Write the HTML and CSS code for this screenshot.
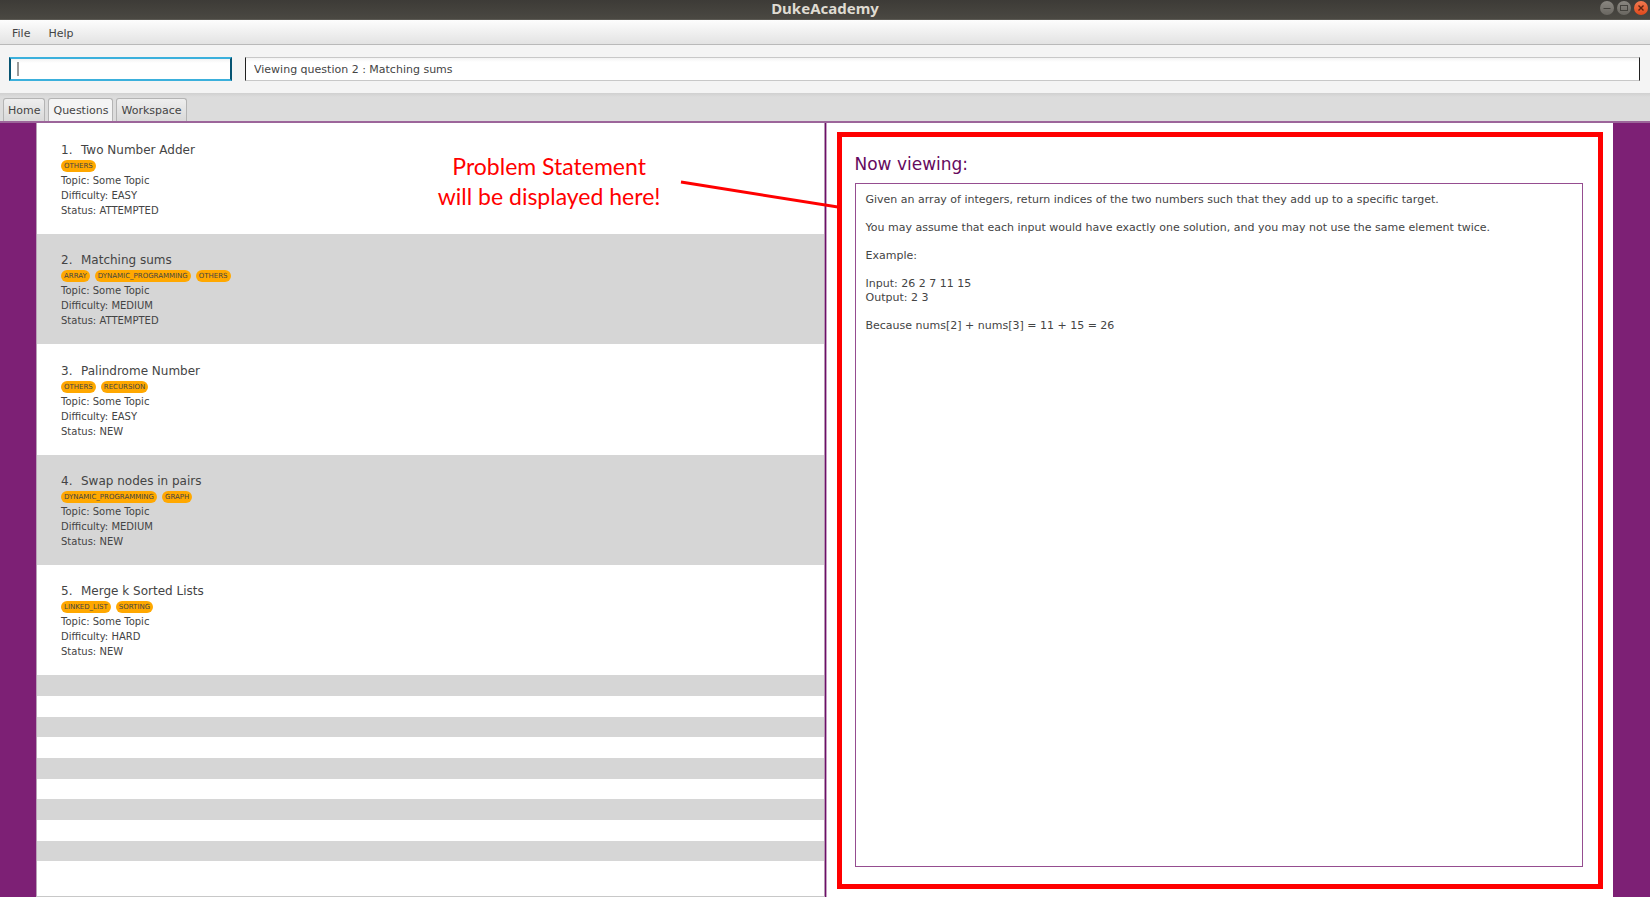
FILE: index.html
```html
<!DOCTYPE html>
<html lang="en">
<head>
<meta charset="utf-8">
<title>DukeAcademy</title>
<link rel="stylesheet" href="styles.css">
</head>
<body>
<header class="titlebar">
  <h1 class="titlebar-name">DukeAcademy</h1>
  <div class="window-buttons">
    <button class="window-button" type="button" aria-label="Minimize"><svg viewBox="0 0 14 14"><path d="M3.5 7.5h7"/></svg></button>
    <button class="window-button" type="button" aria-label="Maximize"><svg viewBox="0 0 14 14"><rect x="3.5" y="4.5" width="7" height="5"/></svg></button>
    <button class="window-button close" type="button" aria-label="Close"><svg viewBox="0 0 14 14"><path d="M4.5 4.5l5 5M9.5 4.5l-5 5"/></svg></button>
  </div>
</header>
<nav class="menubar">
  <button class="menu" type="button">File</button>
  <button class="menu" type="button">Help</button>
</nav>
<section class="command-row">
  <div class="command-box">
    <input class="field command" type="text" aria-label="Command">
    <span class="caret"></span>
  </div>
  <input class="field result" type="text" aria-label="Result" value="Viewing question 2 : Matching sums" readonly>
</section>
<div class="tabs" role="tablist">
  <button class="tab" type="button" role="tab">Home</button>
  <button class="tab selected" type="button" role="tab" aria-selected="true">Questions</button>
  <button class="tab" type="button" role="tab">Workspace</button>
</div>
<main class="workspace">
  <section class="list-pane">
    <ol class="questions">
      <li class="question">
        <h2 class="question-title"><span class="number">1.</span>Two Number Adder</h2>
        <div class="tags"><span class="tag">OTHERS</span></div>
        <p>Topic: Some Topic</p><p>Difficulty: EASY</p><p>Status: ATTEMPTED</p>
      </li>
      <li class="question">
        <h2 class="question-title"><span class="number">2.</span>Matching sums</h2>
        <div class="tags"><span class="tag">ARRAY</span><span class="tag">DYNAMIC_PROGRAMMING</span><span class="tag">OTHERS</span></div>
        <p>Topic: Some Topic</p><p>Difficulty: MEDIUM</p><p>Status: ATTEMPTED</p>
      </li>
      <li class="question">
        <h2 class="question-title"><span class="number">3.</span>Palindrome Number</h2>
        <div class="tags"><span class="tag">OTHERS</span><span class="tag">RECURSION</span></div>
        <p>Topic: Some Topic</p><p>Difficulty: EASY</p><p>Status: NEW</p>
      </li>
      <li class="question">
        <h2 class="question-title"><span class="number">4.</span>Swap nodes in pairs</h2>
        <div class="tags"><span class="tag">DYNAMIC_PROGRAMMING</span><span class="tag">GRAPH</span></div>
        <p>Topic: Some Topic</p><p>Difficulty: MEDIUM</p><p>Status: NEW</p>
      </li>
      <li class="question">
        <h2 class="question-title"><span class="number">5.</span>Merge k Sorted Lists</h2>
        <div class="tags"><span class="tag">LINKED_LIST</span><span class="tag">SORTING</span></div>
        <p>Topic: Some Topic</p><p>Difficulty: HARD</p><p>Status: NEW</p>
      </li>
    </ol>
    <div class="empty-rows"><i></i><i></i><i></i><i></i><i></i><i></i><i></i><i></i><i></i></div>
    <div class="callout">
      <p class="callout-text">Problem Statement<br>will be displayed here!</p>
      <svg class="callout-line" viewBox="0 0 160 32" width="160" height="32"><path d="M3 3L160 28"/></svg>
    </div>
  </section>
  <section class="statement-pane">
    <div class="highlight">
      <h2 class="viewing">Now viewing:</h2>
      <article class="statement">
        <p>Given an array of integers, return indices of the two numbers such that they add up to a specific target.</p>
        <p>You may assume that each input would have exactly one solution, and you may not use the same element twice.</p>
        <p>Example:</p>
        <p>Input: 26 2 7 11 15<br>Output: 2 3</p>
        <p>Because nums[2] + nums[3] = 11 + 15 = 26</p>
      </article>
    </div>
  </section>
</main>
</body>
</html>
```
FILE: styles.css
```css
* { box-sizing: border-box; }

body {
  margin: 0;
  min-height: 100vh;
  display: flex;
  flex-direction: column;
  background: #f4f4f4;
  color: #444;
  font: 11px/14px "DejaVu Sans", sans-serif;
}

h1, h2, p, ol { margin: 0; padding: 0; font-weight: normal; }
button, input { font: inherit; color: inherit; }

.titlebar {
  height: 20px;
  display: grid;
  grid-template-columns: 1fr auto 1fr;
  background: linear-gradient(#3d3b37, #4a4842);
  border-bottom: 1px solid #5c5a54;
}
.titlebar-name {
  grid-column: 2;
  font: bold 15px/16px "Noto Sans", sans-serif;
  color: #dfdbd2;
}
.window-buttons {
  display: flex;
  justify-content: flex-end;
  gap: 3px;
  padding: 1px 2px 0 0;
}
.window-button {
  width: 14px;
  height: 14px;
  padding: 0;
  border: 0;
  border-radius: 50%;
  background: linear-gradient(#8a8781, #696660);
}
.window-button svg { display: block; width: 14px; height: 14px; fill: none; stroke: #44423d; }
.window-button.close { background: linear-gradient(#f37a50, #e0491b); }
.window-button.close svg { stroke: #5d2310; stroke-width: 1.4; }

.menubar {
  height: 25px;
  display: flex;
  gap: 18px;
  padding: 0 12px;
  background: linear-gradient(#fdfdfd, #e3e3e3);
  border-bottom: 1px solid #b9b9b9;
}
.menu { padding: 3px 0 0; border: 0; background: none; }

.command-row {
  display: flex;
  gap: 13px;
  padding: 12px 10px 12px 9px;
}
.command-box { position: relative; width: 223px; }
.field {
  width: 100%;
  height: 24px;
  margin: 0;
  padding: 0 8px;
  border: 1px solid #c8c8c8;
  border-left: 1px solid #222;
  border-right: 1px solid #222;
  background: linear-gradient(#f3f3f3, #fff 4px);
  outline: 0;
}
.command {
  border: 2px solid #3bb0dc;
  border-left-color: #075472;
  border-right-color: #075472;
}
.result { flex: 1; }
.caret {
  position: absolute;
  left: 8px;
  top: 5px;
  width: 2px;
  height: 14px;
  background: #999;
}

.tabs {
  height: 30px;
  display: flex;
  gap: 3px;
  padding: 5px 3px 0;
  background: linear-gradient(#d0d0d0, #dcdcdc 4px);
  border-bottom: 2px solid #9c659a;
}
.tab {
  padding: 2px 4px 0;
  border: 1px solid #b4b4b4;
  border-bottom: 0;
  border-radius: 3px 3px 0 0;
  background: linear-gradient(#eee, #d9d9d9);
}
.tab.selected { background: #f4f4f4; }

.workspace {
  flex: 1;
  display: grid;
  grid-template-columns: minmax(0, 1fr) minmax(0, 1fr);
  padding: 0 37px 0 36px;
  background: #7d2075;
}
.list-pane {
  position: relative;
  background: #fff;
  border-left: 1px solid #b9a0b7;
  border-right: 1px solid #b598b3;
  border-bottom: 1px solid #c8c8c8;
}
.questions { list-style: none; }
.question {
  height: 110px;
  padding: 18px 24px 0;
  font-size: 10px;
  line-height: 15px;
}
.question:first-child, .question:nth-child(3) { height: 111px; padding-top: 19px; }
.question:nth-child(even) { background: #d6d6d6; }
.question-title { display: flex; font-size: 12px; line-height: 16px; }
.number { width: 20px; }
.tags { display: flex; gap: 5px; padding: 2px 0 1px; }
.tag {
  padding: 0 3px;
  border-radius: 6px;
  background: #ffa800;
  font-size: 7px;
  line-height: 12px;
}
.empty-rows i { display: block; height: 21px; }
.empty-rows i:nth-child(3n) { height: 20px; }
.empty-rows i:nth-child(odd) { background: #d6d6d6; }

.callout {
  position: absolute;
  top: 28px;
  right: -14px;
  display: flex;
  gap: 17px;
  color: #f00;
}
.callout-text {
  font: 23px/30px Lato, sans-serif;
  text-align: center;
}
.callout-line { margin-top: 28px; fill: none; stroke: #f00; stroke-width: 3; }

.statement-pane {
  display: flex;
  padding: 9px 10px 8px 11px;
  background: #fff;
  border-left: 1px solid #6d0f68;
  box-shadow: inset 1px 0 #c79fc4;
}
.highlight {
  flex: 1;
  display: flex;
  flex-direction: column;
  padding: 15px 15px 17px 13px;
  border: 5px solid #f00;
}
.viewing { margin-bottom: 7px; font-size: 17px; line-height: 24px; color: #660a5e; }
.statement {
  flex: 1;
  display: flex;
  flex-direction: column;
  gap: 14px;
  padding: 9px 10px;
  border: 1px solid #954d90;
}
```
